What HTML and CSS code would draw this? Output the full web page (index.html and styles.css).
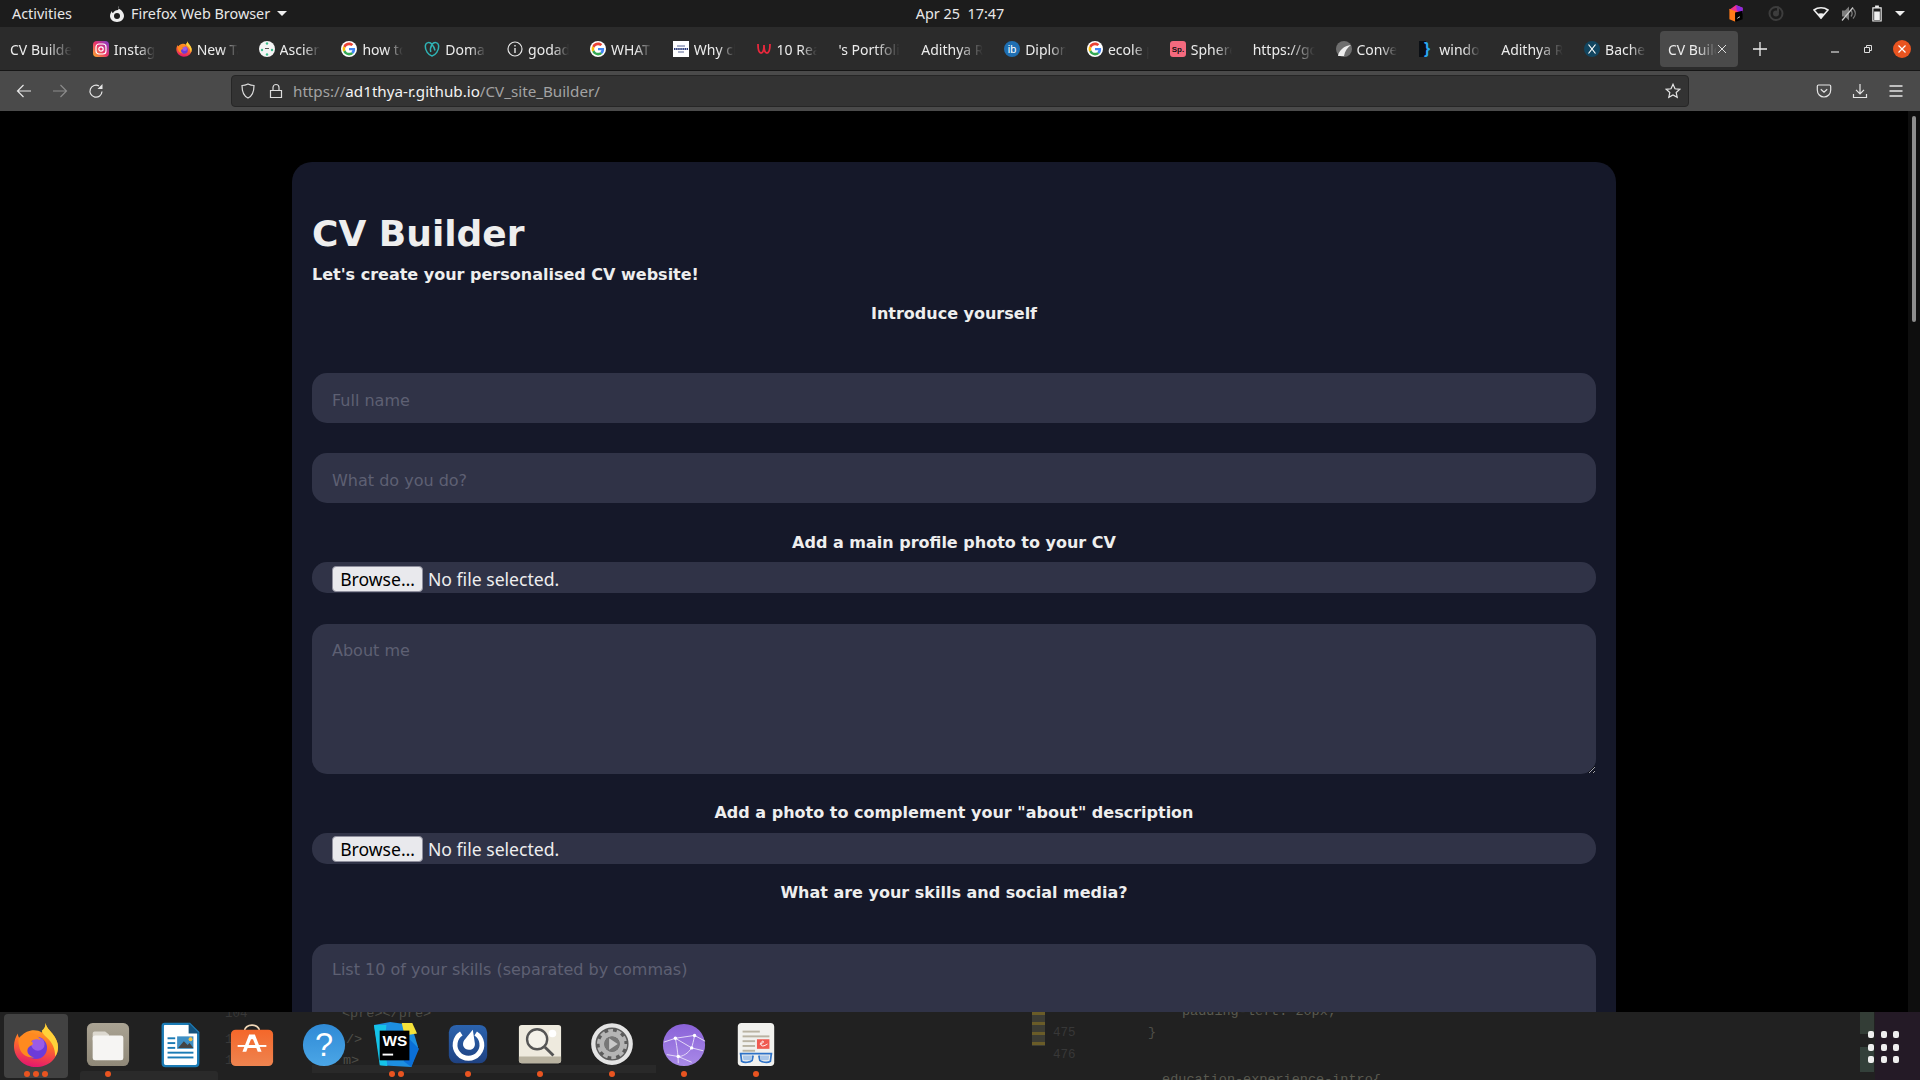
FILE: index.html
```html
<!DOCTYPE html>
<html lang="en">
<head>
<meta charset="UTF-8" />
<meta name="viewport" content="width=device-width, initial-scale=1" />
<title>CV Builder</title>
<link rel="stylesheet" href="styles.css">
</head>
<body>
  <svg class="defs" aria-hidden="true">
    <symbol id="firefox" viewBox="0 0 48 48">
      <defs>
        <linearGradient id="ffBody" x1="0.6" y1="0" x2="0.4" y2="1">
          <stop offset="0" stop-color="#ffb11f"/><stop offset="0.5" stop-color="#ff6a2a"/><stop offset="1" stop-color="#e3156f"/>
        </linearGradient>
      </defs>
      <path fill="url(#ffBody)" d="M34 1c1 5 4 7 7 11 4 5 6 10 6 14 0 12-10 21-23 21C11 47 1 37 1 25c0-5 2-10 4-13 0 2 1 4 2 5 2-4 6-7 11-8 5-1 9 0 12 2 3-3 4-7 4-10z"/>
      <path fill="#ffd23a" d="M34 1c1 5 4 7 7 11 4 5 6 10 6 14 0 4-1 7-3 10 0-8-3-15-9-20-2-2-4-4-5-7 3-2 4-5 4-8z"/>
      <circle cx="24" cy="27" r="11.5" fill="#6d3bd8"/>
      <circle cx="26" cy="23" r="7" fill="#9a5be8"/>
      <path fill="#ff8a1f" d="M6 17c3-4 9-7 14-5 4 1 7 4 9 7-4-2-8-1-10 1 2 1 2 3 1 4-3 1-5 3-5 6 0 3 3 6 7 7-7 1-13-3-15-9-1-4-2-8-1-11z"/>
    </symbol>
    <symbol id="google" viewBox="-6 -6 60 60">
      <circle cx="24" cy="24" r="30" fill="#fff"/>
      <path fill="#EA4335" d="M24 9.5c3.54 0 6.71 1.22 9.21 3.6l6.85-6.85C35.9 2.38 30.47 0 24 0 14.62 0 6.51 5.38 2.56 13.22l7.98 6.19C12.43 13.72 17.74 9.5 24 9.5z"/>
      <path fill="#4285F4" d="M46.98 24.55c0-1.57-.15-3.09-.38-4.55H24v9.02h12.94c-.58 2.96-2.26 5.48-4.78 7.18l7.73 6c4.51-4.18 7.09-10.36 7.09-17.65z"/>
      <path fill="#FBBC05" d="M10.53 28.59c-.48-1.45-.76-2.99-.76-4.59s.27-3.14.76-4.59l-7.98-6.19C.92 16.46 0 20.12 0 24c0 3.88.92 7.54 2.56 10.78l7.97-6.19z"/>
      <path fill="#34A853" d="M24 48c6.48 0 11.93-2.13 15.89-5.81l-7.73-6c-2.15 1.45-4.92 2.3-8.16 2.3-6.26 0-11.57-4.22-13.47-9.91l-7.98 6.19C6.51 42.62 14.62 48 24 48z"/>
    </symbol>
  </svg>

  <div class="topbar">
    <div class="topbar-left">
      <span class="activities">Activities</span>
      <svg class="app-glyph" viewBox="0 0 16 16"><path fill="#eee" d="M9 0c0 2 1 3 3 4 2 2 3 4 3 6 0 3-3 6-7 6s-7-3-7-6c0-2 1-4 2-5 0 1 0 2 1 2 1-2 3-3 5-3 1-1 1-3 0-4z"/><circle cx="8" cy="10" r="3" fill="#1c1c1c"/></svg>
      <span class="app-name">Firefox Web Browser</span>
      <span class="caret"></span>
    </div>
    <div class="clock">Apr 25&nbsp; 17:47</div>
    <div class="tray">
      <svg class="tray-icon toolbox" viewBox="0 0 16 18"><path fill="#f0328c" d="M8 0l7 3v4L8 9 1 5z"/><path fill="#8a2be2" d="M8 0l7 3v6L9 6z"/><path fill="#ff7a18" d="M1 4l7 3v11l-7-3z"/><path fill="#000" d="M7 8l8-2v9l-8 3z"/><path fill="#fff" d="M9 14l3-2v1l-3 1.500z"/></svg>
      <svg class="tray-icon dim" viewBox="0 0 16 16"><circle cx="8" cy="8" r="6.500" fill="none" stroke="#3d3d3d" stroke-width="2"/><circle cx="8" cy="8" r="3" fill="#3d3d3d"/><path fill="#3d3d3d" d="M9 1h2v6H9z"/></svg>
      <svg class="tray-icon wifi" viewBox="0 0 16 14"><path fill="none" stroke="#eee" stroke-width="1.600" d="M1 3.500C5 .5 11 .5 15 3.500l-7 8z"/><path fill="#eee" d="M4.500 7.500c2-1 5-1 7 0L8 12.500z"/></svg>
      <svg class="tray-icon sound" viewBox="0 0 16 16"><path fill="#7d7d7d" d="M1 5h3l4-4v14l-4-4H1z"/><path fill="none" stroke="#7d7d7d" stroke-width="1.300" d="M10 5c1.500 2 1.500 4 0 6M12 3c3 3 3 7 0 10"/><path stroke="#ccc" stroke-width="1.200" d="M1 15L12 2"/></svg>
      <svg class="tray-icon battery" viewBox="0 0 12 18"><path fill="none" stroke="#eee" stroke-width="1.200" d="M1.600 3h8.800v14H1.600z"/><path fill="#eee" d="M4 .500h4V3H4zM3 7h6v9H3z"/></svg>
      <span class="caret"></span>
    </div>
  </div>

  <div class="tabbar">
    <div class="tabs">
      <div class="tab"><span class="tab-label">CV Builder</span></div>
      <div class="tab">
        <svg class="favicon" viewBox="0 0 16 16"><defs><linearGradient id="ig" x1="0" y1="1" x2="1" y2="0"><stop offset="0" stop-color="#fdb32a"/><stop offset="0.5" stop-color="#e8336b"/><stop offset="1" stop-color="#7b3ad0"/></linearGradient></defs><rect width="16" height="16" rx="4" fill="url(#ig)"/><rect x="3" y="3" width="10" height="10" rx="3" fill="none" stroke="#fff" stroke-width="1.200"/><circle cx="8" cy="8" r="2.200" fill="none" stroke="#fff" stroke-width="1.200"/></svg>
        <span class="tab-label">Instagram</span>
      </div>
      <div class="tab"><svg class="favicon"><use href="#firefox"/></svg><span class="tab-label">New Tab</span></div>
      <div class="tab">
        <svg class="favicon" viewBox="0 0 16 16"><circle cx="8" cy="8" r="8" fill="#f4f4f4"/><g fill="#3fbf8f"><circle cx="8" cy="2.500" r="1.200"/><circle cx="3" cy="9" r="1.200"/><circle cx="13" cy="9" r="1.200"/><circle cx="8" cy="13.500" r="1.200"/></g><path stroke="#555" d="M6 7.500h4"/></svg>
        <span class="tab-label">Asciennes</span>
      </div>
      <div class="tab"><svg class="favicon"><use href="#google"/></svg><span class="tab-label">how to</span></div>
      <div class="tab">
        <svg class="favicon" viewBox="0 0 16 16"><path fill="none" stroke="#2fb3b5" stroke-width="1.500" d="M8 3.500C6 .5 1.800 1 1.300 5 1 9.500 4.500 14 8 15c3.500-1 7-5.500 6.700-10C14.200 1 10 .5 8 3.500 6.500 6 6 8.500 6.800 11M8 3.500c1.500 1.500 2.500 3.500 3 6"/></svg>
        <span class="tab-label">Domains</span>
      </div>
      <div class="tab">
        <svg class="favicon" viewBox="0 0 16 16"><circle cx="8" cy="8" r="7" fill="none" stroke="#e6e6e6" stroke-width="1.200"/><path fill="#e6e6e6" d="M7.300 7h1.400v5H7.300zM7.300 4h1.400v1.500H7.300z"/></svg>
        <span class="tab-label">godaddy</span>
      </div>
      <div class="tab"><svg class="favicon"><use href="#google"/></svg><span class="tab-label">WHAT</span></div>
      <div class="tab">
        <svg class="favicon" viewBox="0 0 16 16"><rect width="16" height="16" fill="#fff"/><path stroke="#2a3a7a" stroke-width="2" stroke-dasharray="1.500 .6" d="M1 8h14"/><path stroke="#2a3a7a" stroke-width=".8" d="M4 5h8M5 11h6"/></svg>
        <span class="tab-label">Why choose</span>
      </div>
      <div class="tab">
        <svg class="favicon" viewBox="0 0 16 16"><path fill="none" stroke="#e8283c" stroke-width="1.800" d="M2 3c0 6 1 9 3 9s3-3 3-8c0 5 1 8 3 8s3-3 3-9"/></svg>
        <span class="tab-label">10 Reasons</span>
      </div>
      <div class="tab"><span class="tab-label">'s Portfolio</span></div>
      <div class="tab"><span class="tab-label">Adithya R</span></div>
      <div class="tab">
        <svg class="favicon" viewBox="0 0 16 16"><circle cx="8" cy="8" r="8" fill="#1f6fb2"/><text class="fav-text" x="8" y="12" text-anchor="middle" font-size="11" fill="#fff">ib</text></svg>
        <span class="tab-label">Diploma</span>
      </div>
      <div class="tab"><svg class="favicon"><use href="#google"/></svg><span class="tab-label">ecole p</span></div>
      <div class="tab">
        <svg class="favicon" viewBox="0 0 16 16"><rect width="16" height="16" rx="3" fill="#f56a7e"/><text class="fav-text" x="8" y="11" text-anchor="middle" font-size="8" font-weight="700" fill="#111">Sp.</text></svg>
        <span class="tab-label">Sphere</span>
      </div>
      <div class="tab"><span class="tab-label">https://google</span></div>
      <div class="tab">
        <svg class="favicon" viewBox="0 0 16 16"><circle cx="8" cy="8" r="8" fill="#6f6f6f"/><path fill="#eee" d="M2 15C3 9 8 5 15 4c-4 3-6 6-7 11z"/></svg>
        <span class="tab-label">Convert</span>
      </div>
      <div class="tab">
        <svg class="favicon" viewBox="0 0 16 16"><rect x="1" width="7" height="16" fill="#0b0f14"/><text class="fav-text" x="9" y="13" text-anchor="middle" font-size="16" font-weight="700" fill="#29a8f0">}</text></svg>
        <span class="tab-label">window</span>
      </div>
      <div class="tab"><span class="tab-label">Adithya R</span></div>
      <div class="tab">
        <svg class="favicon" viewBox="0 0 16 16"><circle cx="8" cy="8" r="8" fill="#12455f"/><path stroke="#fff" stroke-width="1.200" d="M4.500 3.500l7 9M11.500 3.500l-7 9"/></svg>
        <span class="tab-label">Bachelor</span>
      </div>
      <div class="tab tab-active">
        <span class="tab-label">CV Builder</span>
        <svg class="tab-close" viewBox="0 0 10 10"><path stroke="#ddd" d="M1 1l8 8M9 1L1 9"/></svg>
      </div>
    </div>
    <svg class="new-tab" viewBox="0 0 14 14"><path stroke="#eee" stroke-width="1.300" d="M7 0v14M0 7h14"/></svg>
    <div class="window-btns">
      <div class="window-btn"><svg viewBox="0 0 10 10" class="win-icon"><path stroke="#ddd" stroke-width="1.200" d="M1 8h8"/></svg></div>
      <div class="window-btn"><svg viewBox="0 0 10 10" class="win-icon"><path fill="none" stroke="#ddd" d="M1.500 3.500h5v5h-5zM3.500 3V1.500h5v5H7"/></svg></div>
      <div class="window-btn window-btn-close"><span class="win-close"><svg viewBox="0 0 10 10" class="win-icon"><path stroke="#fff" stroke-width="1.200" d="M1.500 1.500l7 7M8.500 1.500l-7 7"/></svg></span></div>
    </div>
  </div>

  <div class="navbar">
    <div class="nav-left">
      <svg class="nav-icon" viewBox="0 0 16 16"><path fill="none" stroke="#e6e6e6" stroke-width="1.200" d="M15 8H1.500M7.500 2l-6 6 6 6"/></svg>
      <svg class="nav-icon" viewBox="0 0 16 16"><path fill="none" stroke="#8b8b8b" stroke-width="1.200" d="M1 8h13.500M8.500 2l6 6-6 6"/></svg>
      <svg class="nav-icon" viewBox="0 0 16 16"><path fill="none" stroke="#e6e6e6" stroke-width="1.200" d="M14 8.500A6 6 0 1 1 11 3"/><path fill="#e6e6e6" d="M14.500 1v5h-5z"/></svg>
    </div>
    <div class="urlbar">
      <svg class="url-icon" viewBox="0 0 16 16"><path fill="none" stroke="#ddd" stroke-width="1.200" d="M8 1c2 1 4 1.500 6 1.500 0 6-1.500 10.500-6 12.500C3.500 13 2 8.500 2 2.500 4 2.500 6 2 8 1z"/></svg>
      <svg class="url-icon" viewBox="0 0 16 16"><path fill="none" stroke="#ddd" stroke-width="1.200" d="M2.500 7.500h11v7h-11zM5 7.500V4.500a3 3 0 0 1 6 0v3"/></svg>
      <span class="url"><span class="url-dim">https://</span>ad1thya-r.github.io<span class="url-dim">/CV_site_Builder/</span></span>
      <svg class="url-star" viewBox="0 0 16 16"><path fill="none" stroke="#e6e6e6" stroke-width="1.200" d="M8 1.300l2 4.500 4.800.5-3.600 3.200 1 4.800L8 12l-4.200 2.300 1-4.800L1.200 6.300 6 5.800z"/></svg>
    </div>
    <div class="nav-right">
      <svg class="nav-icon" viewBox="0 0 16 16"><path fill="none" stroke="#e6e6e6" stroke-width="1.200" d="M2.500 2h11c.8 0 1.200.5 1.200 1.200V7c0 4-3 7-6.700 7S1.300 11 1.300 7V3.200C1.300 2.500 1.700 2 2.500 2zM4.800 6.300L8 9.300l3.200-3"/></svg>
      <svg class="nav-icon" viewBox="0 0 16 16"><path fill="none" stroke="#e6e6e6" stroke-width="1.200" d="M8 1v9.500M4 6.800l4 4 4-4M1.500 11v3.500h13V11"/></svg>
      <svg class="nav-icon" viewBox="0 0 16 16"><path stroke="#e6e6e6" stroke-width="1.300" d="M1.500 3h13M1.500 8h13M1.500 13h13"/></svg>
    </div>
  </div>

  <div class="viewport">
    <main class="page">
      <div class="card">
        <h1>CV Builder</h1>
        <p class="lead">Let's create your personalised CV website!</p>
        <h3 class="section section-intro">Introduce yourself</h3>
        <input class="field" type="text" placeholder="Full name">
        <input class="field" type="text" placeholder="What do you do?">
        <h3 class="section">Add a main profile photo to your CV</h3>
        <div class="file-row">
          <button class="browse" type="button">Browse…</button>
          <span class="file-name">No file selected.</span>
        </div>
        <textarea class="field area" placeholder="About me"></textarea>
        <h3 class="section section-about">Add a photo to complement your "about" description</h3>
        <div class="file-row file-row-tight">
          <button class="browse" type="button">Browse…</button>
          <span class="file-name">No file selected.</span>
        </div>
        <h3 class="section section-skills">What are your skills and social media?</h3>
        <textarea class="field area area-skills" placeholder="List 10 of your skills (separated by commas)"></textarea>
      </div>
    </main>
    <div class="scrollbar"><div class="scroll-thumb"></div></div>
  </div>

  <div class="dock">
    <div class="dock-ghost">
      <span class="ghost ghost-num g-104">104</span>
      <span class="ghost ghost-num g-n2">1</span>
      <span class="ghost ghost-num g-n3">1</span>
      <span class="ghost g-pre">&lt;pre&gt;&lt;/pre&gt;</span>
      <span class="ghost g-a">/&gt;</span>
      <span class="ghost g-b">m&gt;</span>
      <span class="ghost g-pad">padding-left: 20px;</span>
      <span class="ghost ghost-num g-475">475</span>
      <span class="ghost ghost-num g-476">476</span>
      <span class="ghost g-brace">}</span>
      <span class="ghost g-edu">.education-experience-intro{</span>
      <span class="ghost-bar"></span>
      <span class="ghost-strip"></span>
      <span class="ghost-tabs"></span>
      <span class="ghost-green"></span>
    </div>

    <div class="dock-item dock-active">
      <svg class="dock-icon"><use href="#firefox"/></svg>
      <div class="dots"><i></i><i></i><i></i></div>
    </div>
    <div class="dock-item">
      <svg class="dock-icon" viewBox="0 0 48 48"><defs><linearGradient id="filesBg" x1="0" y1="0" x2="0" y2="1"><stop offset="0" stop-color="#aaa393"/><stop offset="1" stop-color="#8f8878"/></linearGradient></defs><rect x="2" y="1" width="44" height="45" rx="6" fill="url(#filesBg)"/><path fill="#dcd8cf" d="M8 12c0-1 1-2 2-2h11l4 3v6H8z"/><rect x="8" y="14" width="32" height="26" rx="2.500" fill="#f6f5f3"/></svg>
      <div class="dots"><i></i></div>
    </div>
    <div class="dock-item">
      <svg class="dock-icon" viewBox="0 0 48 48"><path fill="#fff" stroke="#1b7bb5" stroke-width="2.500" d="M6 4c0-1 1-2 2-2h26l9 9v32c0 2-1 3-3 3H9c-2 0-3-1-3-3z"/><path fill="#14537e" d="M33 1l11 11H33z"/><g fill="#1b7bb5"><rect x="11" y="16" width="8" height="2"/><rect x="11" y="21" width="8" height="2"/><rect x="11" y="26" width="8" height="2"/><rect x="11" y="31" width="27" height="2"/><rect x="11" y="36" width="27" height="2"/></g><rect x="21" y="15" width="17" height="13" fill="#3e8fc4"/><path fill="#444" d="M22 27l6-7 4 4 2-2 4 5z"/><circle cx="35" cy="18" r="2" fill="#f5c242"/></svg>
    </div>
    <div class="dock-item">
      <svg class="dock-icon" viewBox="0 0 48 48"><defs><linearGradient id="storeBg" x1="0" y1="0" x2="0" y2="1"><stop offset="0" stop-color="#f4672a"/><stop offset="1" stop-color="#ee8450"/></linearGradient></defs><path fill="none" stroke="#f0d8b8" stroke-width="1.800" d="M16 10c0-9 16-9 16 0v2"/><rect x="2" y="8" width="44" height="38" rx="5" fill="url(#storeBg)"/><path fill="#fff" d="M21 13h6l7 18h-4l-1.500-4h-9L18 31h-4zM23 18l-2.500 6h7L25 18h-2z"/><path stroke="#fff" stroke-width="2" d="M9 25h30"/></svg>
    </div>
    <div class="dock-item">
      <svg class="dock-icon" viewBox="0 0 48 48"><defs><linearGradient id="helpBg" x1="0" y1="0" x2="0" y2="1"><stop offset="0" stop-color="#2f8ad6"/><stop offset="1" stop-color="#4ba6e6"/></linearGradient></defs><circle cx="24" cy="24" r="22" fill="url(#helpBg)"/><text class="dock-text" x="24" y="36" text-anchor="middle" font-size="34" fill="#fff">?</text></svg>
    </div>
    <div class="dock-item">
      <svg class="dock-icon" viewBox="0 0 48 48"><path fill="#1d8fe0" d="M1 3l17-3 22 3 7 23-7 21-32-2z"/><path fill="#15c3e8" d="M1 3l13 0-2 20 3 23-8-1z"/><path fill="#f5e23a" d="M30 1h11l5 11-13 2z"/><path fill="#0a6fd8" d="M38 18l10 10-8 19-8-6z"/><rect x="7" y="9" width="31" height="31" fill="#000"/><text class="dock-text ws" x="10" y="25" font-size="16" font-weight="700" fill="#fff">WS</text><rect x="10" y="33" width="11" height="2" fill="#fff"/></svg>
      <div class="dots"><i></i><i></i></div>
    </div>
    <div class="dock-item">
      <svg class="dock-icon" viewBox="0 0 48 48"><defs><linearGradient id="mmBg" x1="0" y1="0" x2="0" y2="1"><stop offset="0" stop-color="#2b63ae"/><stop offset="1" stop-color="#1f4282"/></linearGradient></defs><rect x="4" y="3" width="40" height="40" rx="8" fill="url(#mmBg)"/><path fill="none" stroke="#fff" stroke-width="5" d="M17 12A14 14 0 1 0 32 12"/><path fill="#fff" d="M29 8l-9 11c-3 5 0 10 5 10s7-4 6-8z"/></svg>
      <div class="dots"><i></i></div>
    </div>
    <div class="dock-item">
      <svg class="dock-icon" viewBox="0 0 48 48"><rect x="2" y="3" width="44" height="40" rx="3" fill="#eeeade"/><path fill="#b8b2a0" d="M2 36h44v4c0 2-1 3-3 3H5c-2 0-3-1-3-3z"/><circle cx="37" cy="12" r="4" fill="#fff"/><circle cx="21" cy="18" r="10.500" fill="#f4f2ea" stroke="#555" stroke-width="2.500"/><path stroke="#555" stroke-width="3" d="M29 26l9 9"/></svg>
      <div class="dots"><i></i></div>
    </div>
    <div class="dock-item">
      <svg class="dock-icon" viewBox="0 0 48 48"><circle cx="24" cy="23" r="21" fill="#5c5c5c"/><circle cx="24" cy="23" r="19.500" fill="none" stroke="#e4e4e4" stroke-width="4.500"/><circle cx="24" cy="23" r="10.500" fill="none" stroke="#b5b5b5" stroke-width="5"/><circle cx="24" cy="23" r="14" fill="none" stroke="#b5b5b5" stroke-width="3.500" stroke-dasharray="5 3.800"/><circle cx="24" cy="23" r="8" fill="#777"/><path fill="#c9c9c9" d="M21 17l9 6-9 6z"/></svg>
      <div class="dots"><i></i></div>
    </div>
    <div class="dock-item">
      <svg class="dock-icon" viewBox="0 0 48 48"><defs><linearGradient id="netBg" x1="0" y1="0" x2="0" y2="1"><stop offset="0" stop-color="#8a62d8"/><stop offset="1" stop-color="#a98ae8"/></linearGradient></defs><circle cx="24" cy="24" r="22" fill="url(#netBg)"/><g fill="none" stroke="#e6dcf8" stroke-width="1"><path d="M3 21l12-4 20-3 11 6M15 17c2 10 3 20 3 26M35 14c-1 6-2 9-3 13-4 6-9 9-14 9M15 17l17 10 12 3M6 34l12 2 14 6"/></g><g fill="#fff"><circle cx="15" cy="17" r="1.800"/><circle cx="35" cy="14" r="1.800"/><circle cx="32" cy="27" r="1.800"/><circle cx="18" cy="36" r="1.800"/></g></svg>
      <div class="dots"><i></i></div>
    </div>
    <div class="dock-item">
      <svg class="dock-icon" viewBox="0 0 48 48"><rect x="5" y="1" width="38" height="45" rx="4" fill="#f1f1ee"/><g fill="#b9b3a2"><rect x="10" y="9" width="18" height="2"/><rect x="10" y="14" width="28" height="2"/><rect x="10" y="19" width="13" height="2"/><rect x="10" y="24" width="13" height="2"/><rect x="10" y="29" width="13" height="2"/></g><rect x="25" y="18" width="13" height="10" fill="#ef5a50"/><path fill="none" stroke="#fff" d="M28 23c3 0 5-3 3-3s-3 5 0 5c2 0 3-1 5-2"/><g fill="none" stroke="#2f73c8" stroke-width="1.800"><path d="M7 33h34M8 33l1 8c3 2 9 1 11-1l1-5M27 35l1 5c2 2 8 3 11 1l1-8"/></g><path fill="#a9c6e8" d="M10 35h10l-1 5h-8zM28 35h10l-1 5h-8z"/></svg>
      <div class="dots"><i></i></div>
    </div>

    <div class="apps-btn">
      <i></i><i></i><i></i><i></i><i></i><i></i><i></i><i></i><i></i>
    </div>
  </div>
</body>
</html>
```

FILE: styles.css
```css
* {
  box-sizing: border-box;
}
html, body {
  height: 100%;
}
body {
  margin: 0;
  height: 1080px;
  display: flex;
  flex-direction: column;
  overflow: hidden;
  background: #000;
  font-family: 'Noto Sans', sans-serif;
  color: #eee;
}
.defs {
  position: absolute;
  width: 0;
  height: 0;
}

/* gnome top bar */
.topbar {
  height: 27px;
  flex: none;
  display: grid;
  grid-template-columns: 1fr auto 1fr;
  align-items: center;
  background: #1c1c1c;
  font-size: 14.4px;
  color: #e8e8e8;
}
.topbar-left {
  display: flex;
  align-items: center;
  padding-left: 12px;
}
.activities {
  width: 97px;
}
.app-glyph {
  width: 16px;
  height: 16px;
  margin-right: 6px;
}
.app-name {
  margin-right: 7px;
}
.caret {
  width: 0;
  height: 0;
  border-left: 5px solid transparent;
  border-right: 5px solid transparent;
  border-top: 5px solid #eee;
}
.tray {
  display: flex;
  align-items: center;
  justify-content: flex-end;
  padding-right: 15px;
}
.tray-icon {
  height: 17px;
  width: 16px;
  margin-right: 12px;
}
.toolbox { margin-right: 24px; }
.dim { margin-right: 29px; }
.battery { margin-right: 10px; }

/* firefox tabs */
.tabbar {
  height: 44px;
  flex: none;
  display: flex;
  align-items: center;
  padding: 1px 2px 0;
  background: #2b2b2b;
  border-bottom: 1px solid #161616;
}
.tabs {
  display: flex;
  align-items: center;
}
.tab {
  width: 82.85px;
  height: 36px;
  padding: 0 13px 0 8px;
  display: flex;
  align-items: center;
  gap: 5px;
  flex: none;
  border-radius: 4px;
}
.tab-active {
  width: 78px;
  margin-left: 1px;
  background: #4a4a4a;
  padding-right: 11px;
  gap: 0;
}
.tab-label {
  flex: 1;
  min-width: 0;
  overflow: hidden;
  white-space: nowrap;
  font-size: 14px;
  color: #ececec;
  -webkit-mask-image: linear-gradient(to right, #000 60%, transparent);
  mask-image: linear-gradient(to right, #000 60%, transparent);
}
.favicon {
  width: 16px;
  height: 16px;
  flex: none;
}
.fav-text {
  font-family: 'Liberation Sans', sans-serif;
}
.tab-close {
  width: 10px;
  height: 10px;
  flex: none;
}
.new-tab {
  width: 14px;
  height: 14px;
  margin-left: 15px;
  flex: none;
}
.window-btns {
  margin-left: auto;
  display: flex;
  align-items: center;
}
.window-btn {
  width: 33px;
  height: 20px;
  display: flex;
  align-items: center;
  justify-content: center;
}
.window-btn-close {
  margin-left: 1px;
}
.win-icon {
  width: 10px;
  height: 10px;
}
.win-close {
  width: 18px;
  height: 18px;
  border-radius: 50%;
  background: #e95420;
  display: flex;
  align-items: center;
  justify-content: center;
}

/* address bar */
.navbar {
  height: 40px;
  flex: none;
  display: flex;
  align-items: center;
  background: #4a4a4a;
}
.nav-left, .nav-right {
  display: flex;
  align-items: center;
  gap: 20px;
}
.nav-left {
  padding-left: 16px;
  width: 231px;
}
.nav-right {
  padding-left: 127px;
}
.nav-icon {
  width: 16px;
  height: 16px;
}
.urlbar {
  width: 1458px;
  height: 32px;
  display: flex;
  align-items: center;
  padding-left: 8px;
  background: #333;
  border: 1px solid #262626;
  border-radius: 4px;
  font-size: 15.2px;
}
.url-icon {
  width: 16px;
  height: 16px;
  margin-right: 12px;
}
.url {
  margin-left: -3px;
  color: #f2f2f2;
}
.url-dim {
  color: #a3a3a3;
}
.url-star {
  width: 16px;
  height: 16px;
  margin-left: auto;
  margin-right: 7px;
}

/* the page */
.viewport {
  flex: 1;
  min-height: 0;
  display: flex;
}
.page {
  flex: 1;
  overflow: hidden;
  padding-top: 51px;
  font-family: 'DejaVu Sans', sans-serif;
}
.card {
  width: 1324px;
  margin: 0 auto;
  padding: 30px 20px 20px;
  background: #151829;
  border-radius: 20px;
}
h1 {
  margin: 21px 0 0;
  font-size: 36px;
  line-height: 42px;
  font-weight: 700;
  color: #eee;
}
.lead {
  margin: 10px 0 0;
  font-size: 16px;
  line-height: 19px;
  font-weight: 700;
  color: #eee;
}
.section {
  margin: 30px 0 10px;
  font-size: 16px;
  line-height: 19px;
  font-weight: 700;
  text-align: center;
  color: #eee;
}
.section-intro {
  margin: 20px 0 50px;
}
.section-about {
  margin: 28px 0 11px;
}
.section-skills {
  margin: 19px 0 42px;
}
.field {
  display: block;
  width: 100%;
  height: 50px;
  margin-bottom: 30px;
  padding: 4px 20px 0;
  background: #303347;
  border: none;
  border-radius: 15px;
  outline: none;
  font-family: 'DejaVu Sans', sans-serif;
  font-size: 16px;
  color: #eee;
}
.field::placeholder {
  color: #5e6073;
  opacity: 1;
}
.area {
  height: 150px;
  margin-bottom: 29px;
  padding-top: 17px;
}
.area-skills {
  padding-top: 16px;
}
.file-row {
  height: 31px;
  margin-bottom: 31px;
  padding: 4px 20px 0;
  display: flex;
  align-items: flex-start;
  background: #303347;
  border-radius: 15px;
  font-family: 'Noto Sans', sans-serif;
  font-size: 17.6px;
}
.file-row-tight {
  margin-bottom: 0;
  padding-top: 3px;
}
.browse {
  width: 91px;
  height: 26px;
  padding: 0;
  background: #e9e9ed;
  border: 1px solid #8f8f9d;
  border-radius: 4px;
  font: inherit;
  line-height: 22px;
  color: #000;
}
.file-name {
  margin-left: 5px;
  line-height: 26px;
  color: #eee;
}
.scrollbar {
  width: 12px;
  flex: none;
  padding: 5px 4px 0;
  background: #0e0e0e;
}
.scroll-thumb {
  height: 206px;
  background: #8c8c8c;
  border-radius: 2px;
}

/* ubuntu dock */
.dock {
  height: 68px;
  flex: none;
  position: relative;
  display: flex;
  align-items: flex-start;
  padding-top: 2px;
  background: #212121;
}
.dock-ghost {
  position: absolute;
  inset: 0;
  overflow: hidden;
  font-family: 'Liberation Mono', monospace;
  font-size: 13.500px;
}
.ghost {
  position: absolute;
  line-height: 16px;
  color: #4e4e48;
}
.ghost-num {
  font-size: 12.500px;
  color: #383838;
}
.g-104 { left: 225px; top: -6px; }
.g-n2 { left: 225px; top: 20px; }
.g-n3 { left: 225px; top: 41px; }
.g-pre { left: 342px; top: -6px; }
.g-a { left: 346px; top: 20px; }
.g-b { left: 343px; top: 41px; }
.g-pad { left: 1182px; top: -8px; color: #5a5a50; }
.g-475 { left: 1053px; top: 13px; }
.g-476 { left: 1053px; top: 35px; }
.g-brace { left: 1148px; top: 13px; }
.g-edu { left: 1154px; top: 60px; color: #5a5a50; }
.ghost-bar {
  position: absolute;
  left: 1032px;
  top: 0;
  width: 13px;
  height: 34px;
  background: repeating-linear-gradient(#6a5c28 0 3px, #3c3c34 3px 10px);
}
.ghost-strip {
  position: absolute;
  left: 312px;
  right: 1264px;
  bottom: 7px;
  height: 8px;
  background: #292929;
}
.ghost-tabs {
  position: absolute;
  left: 80px;
  width: 138px;
  top: 59px;
  bottom: 0;
  background: #2a2a2a;
  border-radius: 3px 3px 0 0;
}
.ghost-green {
  position: absolute;
  right: 46px;
  top: 0;
  width: 14px;
  height: 60px;
  background: linear-gradient(#333d36 0 22px, #212121 22px 35px, #33403a 35px);
}
.dock-item {
  position: relative;
  width: 72px;
  height: 64px;
  flex: none;
  display: flex;
  flex-direction: column;
  align-items: center;
  padding-top: 8px;
}
.dock-active::before {
  content: "";
  position: absolute;
  inset: 0 4px;
  background: rgba(255,255,255,0.15);
  border-radius: 4px;
}
.dock-icon {
  position: relative;
  width: 46px;
  height: 46px;
}
.dock-text {
  font-family: 'Liberation Sans', sans-serif;
}
.dots {
  position: relative;
  height: 6px;
  margin-top: 3px;
  display: flex;
  gap: 3px;
}
.dots i {
  width: 6px;
  height: 6px;
  border-radius: 50%;
  background: #e95420;
}
.apps-btn {
  position: relative;
  margin-left: auto;
  margin-top: -2px;
  width: 60px;
  height: 68px;
  padding: 19px 0 0 8px;
  display: grid;
  grid-template-columns: repeat(3, 6px);
  grid-auto-rows: 7px;
  gap: 5.500px 6.500px;
  justify-content: start;
  background: linear-gradient(to right, transparent 15px, #241a26 15px);
}
.apps-btn i {
  background: #eee;
  border-radius: 2px;
}
```
